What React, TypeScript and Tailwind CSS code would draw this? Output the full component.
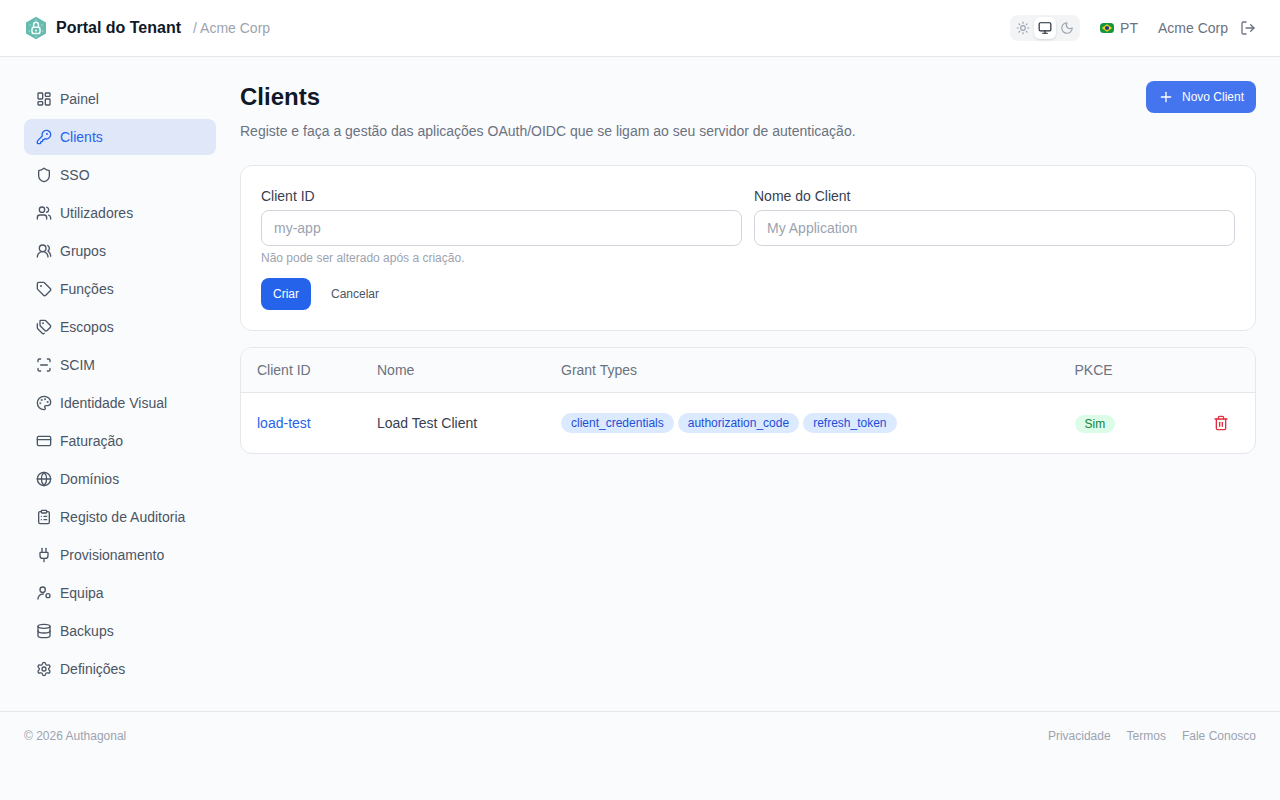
import {
  ClipboardList,
  CreditCard,
  Database,
  Globe,
  KeyRound,
  LayoutDashboard,
  LogOut,
  Monitor,
  Moon,
  Palette,
  Plug,
  Plus,
  ScanLine,
  Settings,
  Shield,
  Sun,
  Tag,
  Tags,
  Trash2,
  Users,
  UsersRound,
} from 'lucide-react'

function TeamIcon({ size = 16, className = '' }: { size?: number; className?: string }) {
  return (
    <svg
      width={size}
      height={size}
      viewBox="0 0 24 24"
      fill="none"
      stroke="currentColor"
      strokeWidth="2"
      strokeLinecap="round"
      strokeLinejoin="round"
      className={className}
    >
      <circle cx="10" cy="7" r="4" />
      <path d="M3 21a7.5 7.5 0 0 1 8-7.5" />
      <circle cx="18" cy="16" r="3" />
    </svg>
  )
}

const NAV = [
  { label: 'Painel', icon: LayoutDashboard },
  { label: 'Clients', icon: KeyRound, active: true },
  { label: 'SSO', icon: Shield },
  { label: 'Utilizadores', icon: Users },
  { label: 'Grupos', icon: UsersRound },
  { label: 'Funções', icon: Tag },
  { label: 'Escopos', icon: Tags },
  { label: 'SCIM', icon: ScanLine },
  { label: 'Identidade Visual', icon: Palette },
  { label: 'Faturação', icon: CreditCard },
  { label: 'Domínios', icon: Globe },
  { label: 'Registo de Auditoria', icon: ClipboardList },
  { label: 'Provisionamento', icon: Plug },
  { label: 'Equipa', icon: TeamIcon },
  { label: 'Backups', icon: Database },
  { label: 'Definições', icon: Settings },
]

const GRANTS = ['client_credentials', 'authorization_code', 'refresh_token']

function Logo() {
  return (
    <svg width="24" height="24" viewBox="0 0 24 24" className="shrink-0">
      <path d="M12 0.8 22 6.4v11.2L12 23.2 2 17.6V6.4z" fill="#66bbb0" />
      <g fill="#bfe6e0">
        <circle cx="6" cy="9" r="0.7" />
        <circle cx="18" cy="9" r="0.7" />
        <circle cx="5.5" cy="15" r="0.7" />
        <circle cx="18.5" cy="15" r="0.7" />
        <circle cx="12" cy="4" r="0.7" />
        <circle cx="12" cy="20.4" r="0.7" />
      </g>
      <rect x="8" y="11.2" width="8" height="6.4" rx="1.8" fill="none" stroke="#f4fffc" strokeWidth="1.5" />
      <path d="M9.6 11.2V8.6a2.4 2.4 0 0 1 4.8 0v2.6" fill="none" stroke="#f4fffc" strokeWidth="1.5" />
      <circle cx="12" cy="14.4" r="1" fill="#f4fffc" />
    </svg>
  )
}

function Flag() {
  return (
    <svg width="14" height="14" viewBox="0 0 14 14" className="shrink-0">
      <rect x="0" y="2" width="14" height="10" rx="3.5" fill="#15963c" />
      <path d="M7 3.2 12.2 7 7 10.8 1.8 7z" fill="#f2d21f" />
      <circle cx="7" cy="7" r="2.1" fill="#1f3c88" />
    </svg>
  )
}

export default function App() {
  return (
    <div className="flex min-h-screen flex-col bg-[#fafbfd] font-['Liberation_Sans',Arial,sans-serif] text-[#111827]">
      <header className="flex h-[57px] items-center justify-between border-b border-[#e5e7eb] bg-white px-6">
        <div className="flex items-center">
          <Logo />
          <span className="ml-2 text-base font-bold text-[#111827]">Portal do Tenant</span>
          <span className="ml-3 text-sm text-[#9ca3af]">/ Acme Corp</span>
        </div>
        <div className="flex items-center">
          <div className="flex h-[26px] w-[70px] items-center rounded-lg bg-[#f3f4f6] p-0.5">
            <span className="flex h-[22px] w-[22px] items-center justify-center text-[#9ca3af]">
              <Sun size={14} />
            </span>
            <span className="flex h-[22px] w-[22px] items-center justify-center rounded-md bg-white text-[#1f2937] shadow-sm">
              <Monitor size={14} />
            </span>
            <span className="flex h-[22px] w-[22px] items-center justify-center text-[#9ca3af]">
              <Moon size={14} />
            </span>
          </div>
          <div className="ml-5 flex items-center gap-1.5 text-sm text-[#6b7280]">
            <Flag />
            <span>PT</span>
          </div>
          <span className="ml-5 text-sm text-[#6b7280]">Acme Corp</span>
          <LogOut size={16} className="ml-3 text-[#6b7280]" />
        </div>
      </header>

      <div className="flex gap-6 px-6 pt-6 pb-6">
        <nav className="flex w-48 shrink-0 flex-col gap-0.5">
          {NAV.map(({ label, icon: Icon, active }) => (
            <a
              key={label}
              className={`flex h-9 items-center gap-2 rounded-lg px-3 text-sm ${
                active ? 'bg-[#e0e7f8] text-[#2563eb]' : 'text-[#4b5563]'
              }`}
            >
              <Icon size={16} className="shrink-0" />
              {label}
            </a>
          ))}
        </nav>

        <main className="min-w-0 flex-1">
          <div className="flex items-start justify-between">
            <div>
              <h1 className="text-2xl leading-8 font-bold text-[#111827]">Clients</h1>
              <p className="mt-2 text-sm text-[#6b7280]">
                Registe e faça a gestão das aplicações OAuth/OIDC que se ligam ao seu servidor de autenticação.
              </p>
            </div>
            <button className="flex h-8 items-center gap-2 rounded-lg bg-[#4475ee] px-3 text-xs text-white">
              <Plus size={16} />
              Novo Client
            </button>
          </div>

          <section className="mt-6 rounded-xl border border-[#e5e7eb] bg-white p-5">
            <div className="grid grid-cols-2 gap-3">
              <div>
                <label className="block text-sm text-[#374151]">Client ID</label>
                <input
                  placeholder="my-app"
                  className="mt-1 h-9 w-full rounded-lg border border-[#d1d5db] bg-white px-3 text-sm placeholder:text-[#9ca3af]"
                />
                <p className="mt-1 text-xs text-[#9ca3af]">Não pode ser alterado após a criação.</p>
              </div>
              <div>
                <label className="block text-sm text-[#374151]">Nome do Client</label>
                <input
                  placeholder="My Application"
                  className="mt-1 h-9 w-full rounded-lg border border-[#d1d5db] bg-white px-3 text-sm placeholder:text-[#9ca3af]"
                />
              </div>
            </div>
            <div className="mt-3 flex gap-2">
              <button className="h-8 rounded-lg bg-[#2563eb] px-3 text-xs text-white">Criar</button>
              <button className="h-8 rounded-lg px-3 text-xs text-[#4b5563]">Cancelar</button>
            </div>
          </section>

          <section className="mt-4 overflow-hidden rounded-xl border border-[#e5e7eb] bg-white">
            <div className="flex h-[45px] items-center border-b border-[#e5e7eb] bg-[#fafbfd] pb-px text-sm text-[#6b7280]">
              <span className="w-[120px] pl-4">Client ID</span>
              <span className="w-[184px] pl-4">Nome</span>
              <span className="w-[513.5px] pl-4">Grant Types</span>
              <span className="pl-4">PKCE</span>
            </div>
            <div className="flex h-[60px] items-center text-sm">
              <span className="w-[120px] pl-4 text-[#2563eb]">load-test</span>
              <span className="w-[184px] pl-4 text-[#374151]">Load Test Client</span>
              <div className="flex w-[513.5px] gap-1 pl-4">
                {GRANTS.map((g) => (
                  <span key={g} className="rounded-full bg-[#dbeafe] px-2.5 py-0.5 text-xs text-[#1d4ed8]">
                    {g}
                  </span>
                ))}
              </div>
              <div className="w-[154px] pl-4">
                <span className="rounded-full bg-[#dcfce7] px-2.5 py-0.5 text-xs text-[#15803d]">Sim</span>
              </div>
              <Trash2 size={16} className="text-[#e0303f]" />
            </div>
          </section>
        </main>
      </div>

      <footer className="flex items-center justify-between border-t border-[#e5e7eb] px-6 py-4 text-xs text-[#9ca3af]">
        <span>© 2026 Authagonal</span>
        <div className="flex gap-4">
          <a>Privacidade</a>
          <a>Termos</a>
          <a>Fale Conosco</a>
        </div>
      </footer>
    </div>
  )
}
